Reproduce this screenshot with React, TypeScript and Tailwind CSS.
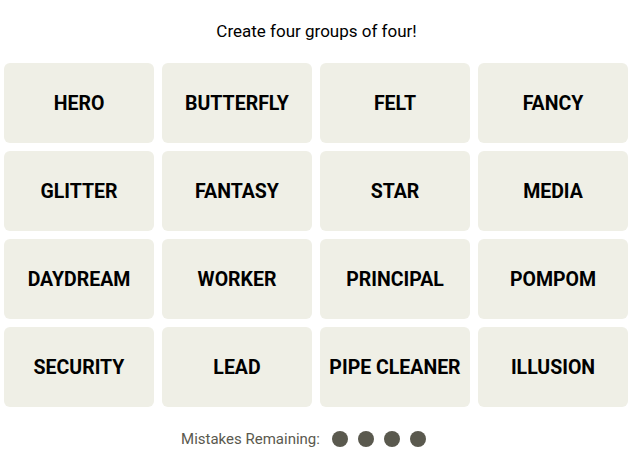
const words = [
  "HERO", "BUTTERFLY", "FELT", "FANCY",
  "GLITTER", "FANTASY", "STAR", "MEDIA",
  "DAYDREAM", "WORKER", "PRINCIPAL", "POMPOM",
  "SECURITY", "LEAD", "PIPE CLEANER", "ILLUSION",
];

export default function App() {
  return (
    <div className="w-[633px] h-[449px] bg-white font-['Roboto',sans-serif]">
      <p className="pt-[19px] h-[63px] text-center text-[17px] text-black">
        Create four groups of four!
      </p>
      <div className="ml-[4px] grid w-[624px] grid-cols-4 gap-2">
        {words.map((w) => (
          <div
            key={w}
            className="flex h-[80px] items-center justify-center rounded-[6px] bg-[#efefe6] pt-[2px] text-[19.5px] font-bold text-black"
          >
            {w}
          </div>
        ))}
      </div>
      <div className="mt-[21px] flex items-center justify-center gap-[10px] pr-[26px]">
        <span className="mr-[2px] text-[15px] text-[#5a594e]">Mistakes Remaining:</span>
        {[0, 1, 2, 3].map((i) => (
          <span key={i} className="h-4 w-4 rounded-full bg-[#5a594e]" />
        ))}
      </div>
    </div>
  );
}
